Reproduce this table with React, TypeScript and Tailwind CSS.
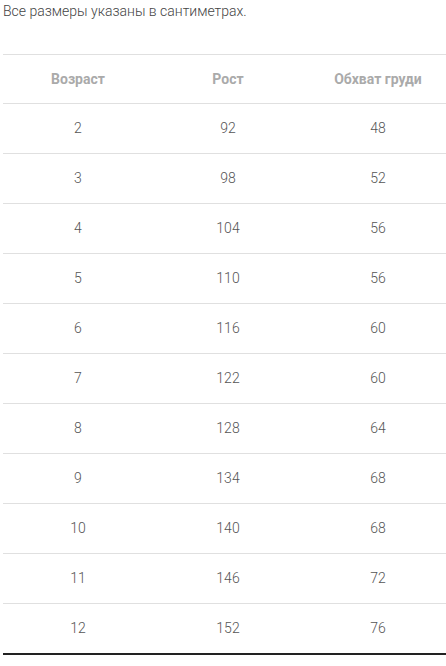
import React from "react";

const rows: [string, string, string][] = [
  ["2", "92", "48"],
  ["3", "98", "52"],
  ["4", "104", "56"],
  ["5", "110", "56"],
  ["6", "116", "60"],
  ["7", "122", "60"],
  ["8", "128", "64"],
  ["9", "134", "68"],
  ["10", "140", "68"],
  ["11", "146", "72"],
  ["12", "152", "76"],
];

export default function App() {
  return (
    <div
      className="w-[446px] h-[666px] overflow-hidden bg-white pl-[3px]"
      style={{ fontFamily: "Roboto, 'Liberation Sans', sans-serif" }}
    >
      <p className="m-0 pt-[3px] text-[14px] leading-[16px] font-light text-[#444]">
        Все размеры указаны в сантиметрах.
      </p>
      <table className="mt-[35px] w-[450px] border-collapse table-fixed">
        <thead>
          <tr className="border-t border-b border-[#e0e0e0]">
            <th className="h-[49px] p-0 text-center text-[14px] font-bold text-[#aaa]">Возраст</th>
            <th className="h-[49px] p-0 text-center text-[14px] font-bold text-[#aaa]">Рост</th>
            <th className="h-[49px] p-0 text-center text-[14px] font-bold text-[#aaa]">Обхват груди</th>
          </tr>
        </thead>
        <tbody>
          {rows.map((r, i) => (
            <tr
              key={i}
              className={
                i === rows.length - 1
                  ? "border-b-2 border-[#222]"
                  : "border-b border-[#e0e0e0]"
              }
            >
              {r.map((c, j) => (
                <td
                  key={j}
                  className="h-[50px] p-0 text-center text-[14px] font-light text-[#555]"
                >
                  {c}
                </td>
              ))}
            </tr>
          ))}
        </tbody>
      </table>
    </div>
  );
}
